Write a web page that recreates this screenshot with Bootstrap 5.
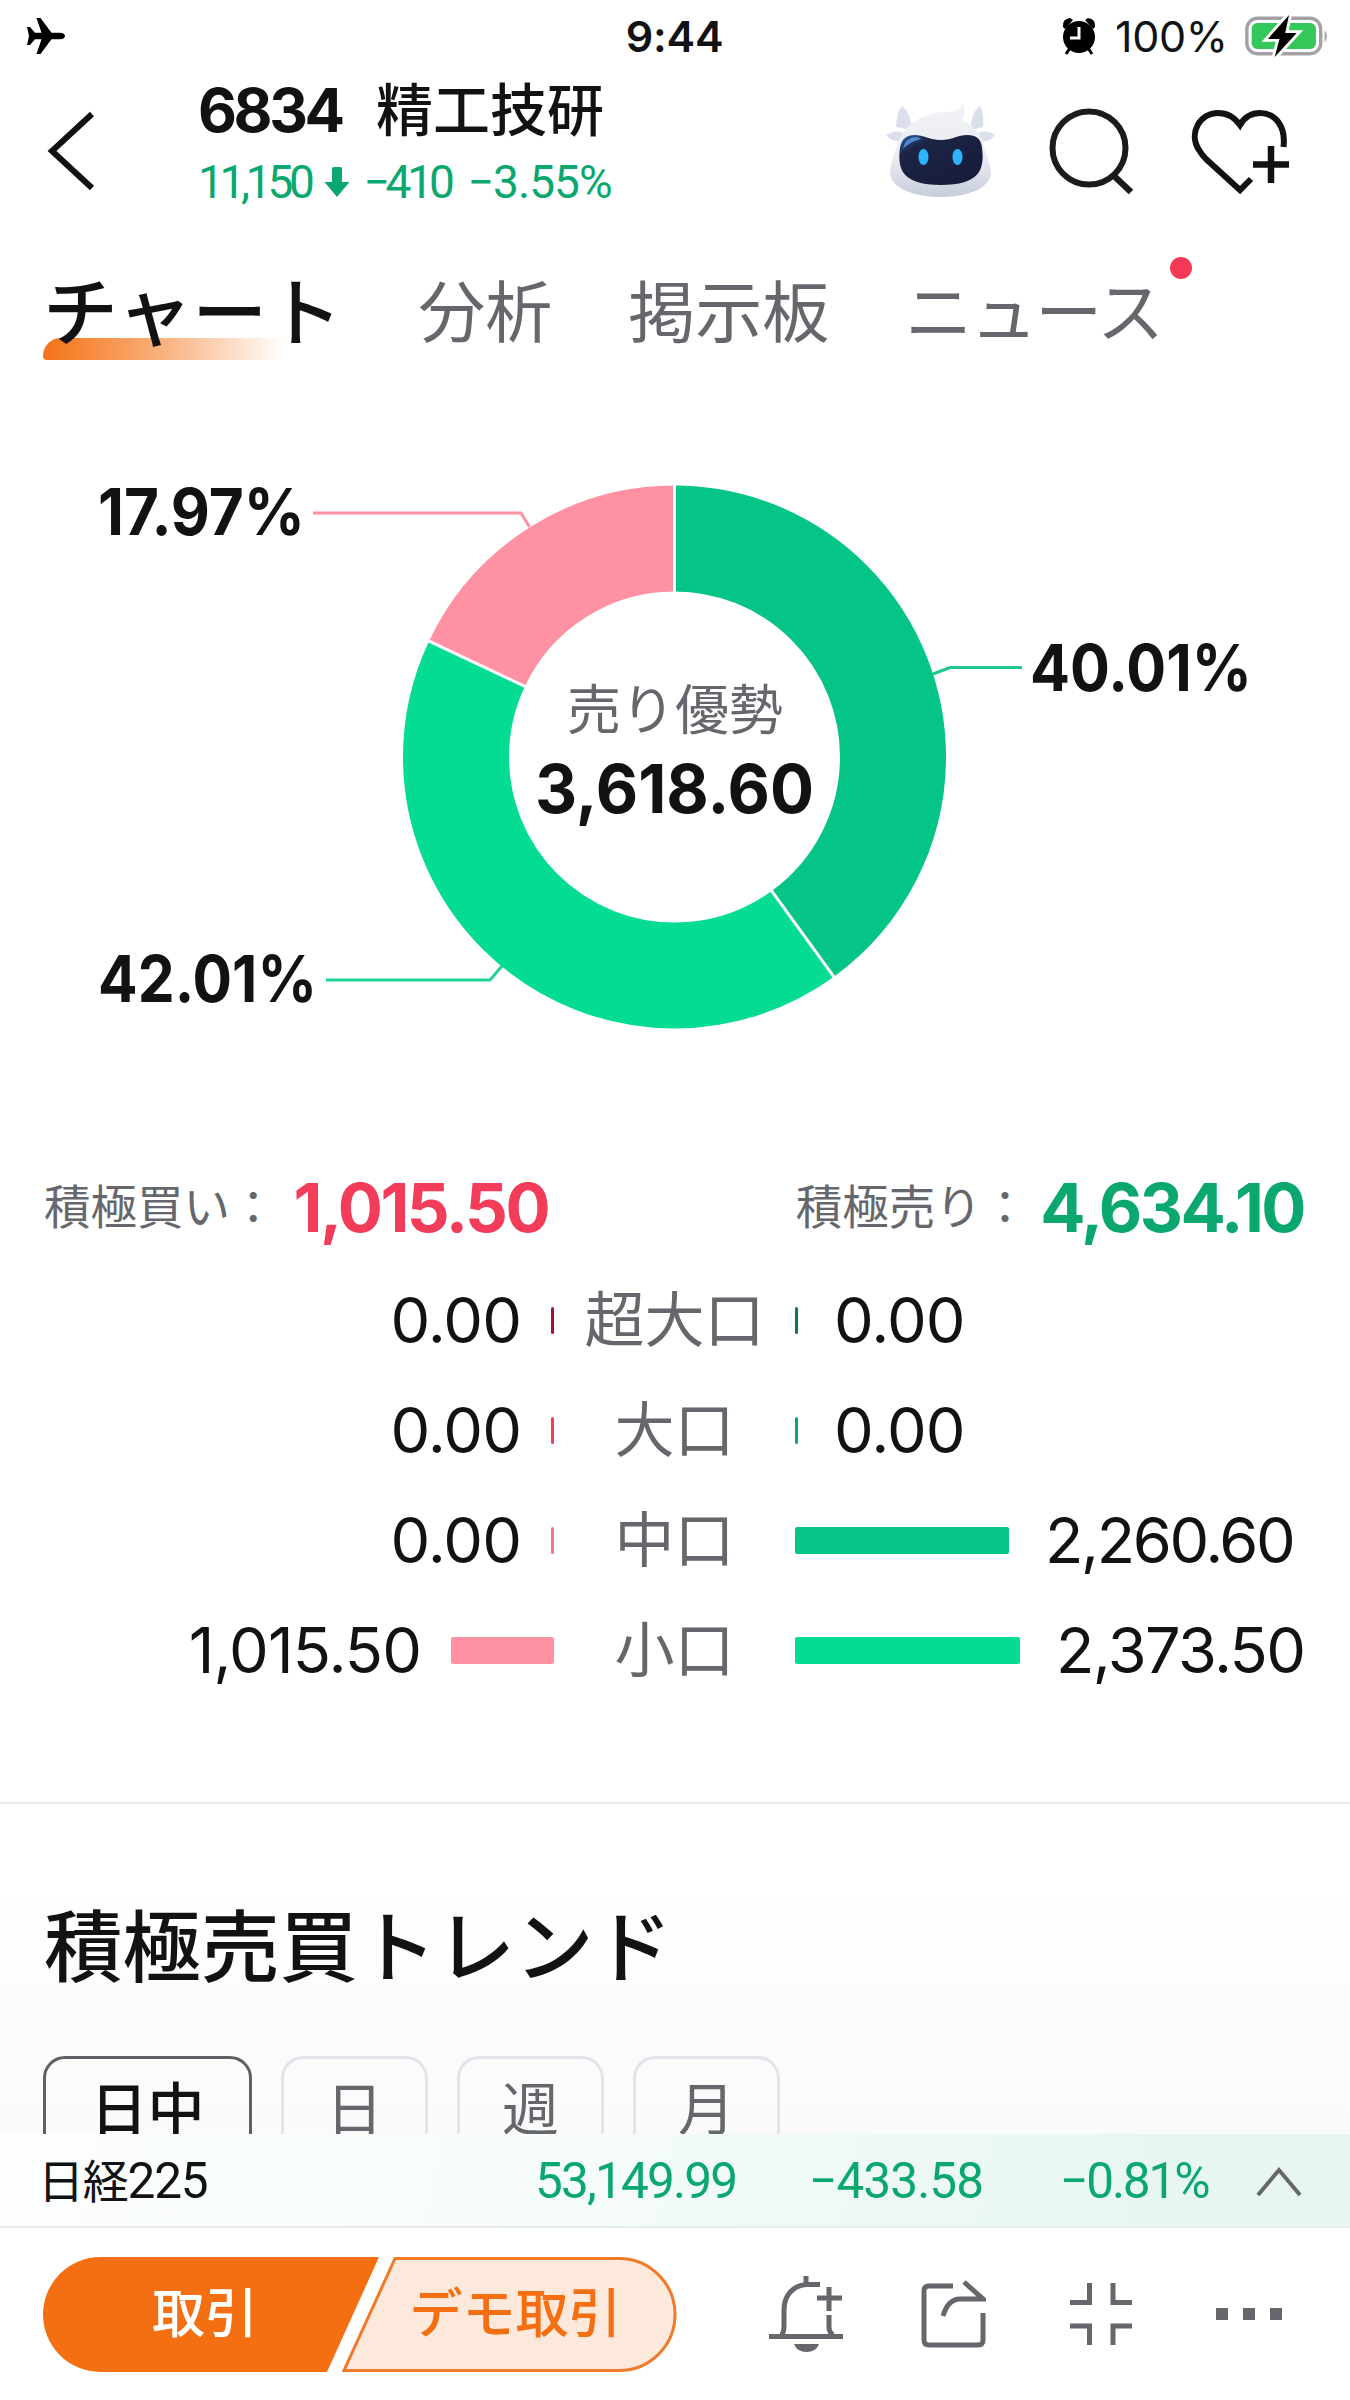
<!DOCTYPE html>
<html lang="ja">
<head>
<meta charset="utf-8">
<meta name="viewport" content="width=device-width, initial-scale=1">
<title>6834 精工技研</title>
<link href="https://cdn.jsdelivr.net/npm/bootstrap@5.3.0/dist/css/bootstrap.min.css" rel="stylesheet">
<style>
  :root { --ink:#111214; --muted-ink:#66676c; --down:#0aa86e; --up:#f23c59; --brand:#f46f12; }
  body { font-family: Inter, "Noto Sans CJK JP", sans-serif; color: var(--ink); background:#fff; line-height:1; }
  .phone { width:1350px; height:2400px; overflow:hidden; white-space:nowrap; }
  .phone > * { flex-shrink:0; }
  .phone svg { display:block; flex:none; }
  .narrow { font-family: Roboto, "Noto Sans CJK JP", sans-serif; }
  .down { color:var(--down); } .up { color:var(--up); } .soft { color:var(--muted-ink); }

  .statusbar { height:72px; padding:0 13px 0 27px; }
  .clock { font-size:43px; font-weight:600; letter-spacing:-.2px; margin-right:15px; }
  .charge { font-size:43px; letter-spacing:-.3px; width:117px; margin-left:19px; }

  .stockbar { height:158px; padding:0 61px 0 47px; }
  .stock-title { font-size:60px; height:72px; margin-top:2px; }
  .stock-code { font-weight:700; letter-spacing:-3.400px; width:178px; }
  .stock-name { font-size:57px; font-weight:500; }
  .stock-price { font-size:46px; height:72px; letter-spacing:-.9px; }

  .tabs-line { height:170px; padding:41px 0 0 43px; gap:76px; font-size:67px; align-items:flex-start; }
  .tab-item { position:relative; height:84px; line-height:84px; color:var(--muted-ink); font-weight:400; }
  .tab-item.on { font-size:75px; color:var(--ink); font-weight:500; z-index:0; }
  .tab-item.on::before { content:""; position:absolute; z-index:-1; left:0; top:67px; width:242px; height:22px;
    border-radius:18px 0 0 4px; background:linear-gradient(90deg,#f47216,rgba(244,114,22,.55) 50%,rgba(244,114,22,0)); }
  .dot-new { position:absolute; right:-30px; top:-14px; width:22px; height:22px; border-radius:50%; background:#f53a58; }

  .totals { height:116px; margin-top:29px; padding:0 46px 0 44px; font-size:46.5px; font-weight:400; }
  .totals b { font-size:67px; font-weight:700; }
  .flow-row { height:110px; font-size:63px; }
  .side-buy { width:554px; gap:30px; } .side-sell { width:555px; gap:36px; }
  .kind { width:241px; text-align:center; font-size:60px; font-weight:400; color:var(--muted-ink); }
  .flow-num { letter-spacing:-.9px; }
  .bar { height:27px; border-radius:2px; }

  .phone > .trend { flex:1 1 0; border-top:2px solid #ececee; margin-top:97px; background:linear-gradient(#fff 25%,#fbfbfc 75%,#fafafb); min-height:0; }
  .trend-head { font-size:78.5px; font-weight:500; line-height:100px; margin:94px 0 58px 44px; }
  .chips { margin-left:43px; gap:29px; }
  .chip { height:104px; width:147px; border:3px solid #e3e3ea; border-radius:22px; font-size:57px; font-weight:400; line-height:101px; text-align:center; color:var(--muted-ink); }
  .chip.on { width:209px; border-color:#606167; color:var(--ink); font-weight:500; }

  .index-strip { height:94px; padding:4px 48px 0 38px; font-size:49.5px; border-bottom:2px solid #e7ebec; background:linear-gradient(100deg,#fcfefd,#f6fcfa 40%,#e8f6f2 85%); }
  .toolbar { height:172px; padding:0 67px 0 43px; }
  .trade { width:634px; height:115px; position:relative; font-size:53px; font-weight:500; }
  .trade svg { position:absolute; inset:0; z-index:0; }
  .trade span { z-index:1; text-align:center; }
</style>
</head>
<body>
<main class="phone d-flex flex-column">

  <header class="statusbar d-flex align-items-center">
    <div class="d-flex" style="flex:1 1 0">
      <svg width="39" height="36" viewBox="0 0 39 36"><path fill="#000" d="M38 18c0 2-2 3.3-5 3.3h-8.500L13.500 36H9.500l5-14.700H8L3 27H0l2-9-2-9h3l5 5.700h6.500L9.500 0h4l11 14.700H33c3 0 5 1.300 5 3.300z"/></svg>
    </div>
    <div class="clock">9:44</div>
    <div class="d-flex align-items-center justify-content-end" style="flex:1 1 0">
      <svg width="34" height="38" viewBox="0 0 34 38"><path d="M8 31l-4 6M26 31l4 6" stroke="#000" stroke-width="3"/><circle cx="17" cy="20" r="16"/><path d="M1 10Q0 2 8 1l3 2-8 9zM33 10Q34 2 26 1l-3 2 8 9z"/><path d="M17 10v11H8" fill="none" stroke="#fff" stroke-width="3"/></svg>
      <div class="charge">100%</div>
      <svg class="ms-2 ps-1" width="97" height="46" viewBox="0 0 97 46"><rect x="3" y="4.500" width="77" height="37" rx="11" fill="#fff" stroke="#a2a2a6" stroke-width="3.500"/><rect x="8" y="9.500" width="67" height="27" rx="6" fill="#34c759"/><path d="M84 17q5 6 0 13z" fill="#a2a2a6"/><path d="M47 1L25 26h12l-5 19 23-25H43z" fill="#000" stroke="#fff" stroke-width="6" paint-order="stroke"/></svg>
    </div>
  </header>

  <section class="stockbar d-flex">
    <svg style="margin-top:39px" width="48" height="80" viewBox="0 0 48 80"><path d="M45 3L5 40l40 37" fill="none" stroke="#111214" stroke-width="6"/></svg>
    <div class="flex-grow-1" style="padding-left:103px">
      <div class="stock-title d-flex align-items-center"><span class="stock-code">6834</span><span class="stock-name">精工技研</span></div>
      <div class="stock-price narrow down d-flex align-items-center"><span style="letter-spacing:-4.300px">11,150</span>
        <svg style="margin:0 14px 0 13px" width="26" height="30" viewBox="0 0 26 30"><path fill="#0aa86e" d="M8 2q0-2 2-2h6q2 0 2 2v13h7.500L13 30 .500 15H8z"/></svg>
        <span style="letter-spacing:-4.200px">−410</span><span style="margin-left:17px">−3.55%</span></div>
    </div>
    <div class="d-flex align-items-start">
      <svg style="margin:30px 52px 0 0" width="112" height="96" viewBox="0 0 112 96">
        <defs><linearGradient id="fur" x1="0" y1="0" x2="0" y2="1"><stop offset="0" stop-color="#f2f3f6"/><stop offset=".6" stop-color="#e9ebf1"/><stop offset="1" stop-color="#c6cddb"/></linearGradient>
        <linearGradient id="visor" x1="0" y1="0" x2="1" y2="1"><stop offset="0" stop-color="#2d5fa8"/><stop offset=".22" stop-color="#1c2444"/><stop offset="1" stop-color="#171a3a"/></linearGradient></defs>
        <path d="M17 4q10 8 9 24L11 25Q12 9 17 4zM95 4q-10 8-9 24l12-3Q99 9 95 4zM1 33q5 7 14 6l4-8q-9-4-18 2zM110 33q-5 7-12 6l-5-8q9-4 17 2z" fill="#d9e0ec"/>
        <path d="M12 45Q16 24 38 15q14-6 29-5 8-1 11-9 4 8-1 17 19 9 22 28 5 10 7 24c0 17-25 25-51 25S5 86 5 70q2-15 7-25z" fill="url(#fur)"/>
        <path d="M15 46q2-13 15-13c8 0 15 5 26 5s17-5 26-5q14 0 15 13c3 22-3 37-41 37S12 68 15 46z" fill="url(#visor)"/>
        <path d="M18 47q2-11 12-12 4 0 6 2-12 3-18 10z" fill="#5089cf"/>
        <ellipse cx="38.500" cy="55" rx="5" ry="8" fill="#2bb5ff"/><ellipse cx="72.500" cy="55" rx="5" ry="8" fill="#2bb5ff"/>
      </svg>
      <svg style="margin:36px 56px 0 0" width="86" height="88" viewBox="0 0 86 88"><circle cx="40" cy="40" r="36.500" fill="none" stroke="#1b1b1d" stroke-width="6"/><path d="M63 66l19 18" stroke="#1b1b1d" stroke-width="6.500"/></svg>
      <svg style="margin-top:36px" width="98" height="88" viewBox="0 0 98 88"><path d="M92.500 39C95 18 84 5 69 5 60 5 53 10 49 17 44 10 37 5 27 5 9 5-3 25 8 42q3 5 7 9l34 31 11-11" fill="none" stroke="#111214" stroke-width="6"/><path d="M80 38v37M62 56.500h36" stroke="#111214" stroke-width="6.500"/></svg>
    </div>
  </section>

  <nav class="tabs-line d-flex">
    <div class="tab-item on">チャート</div>
    <div class="tab-item">分析</div>
    <div class="tab-item">掲示板</div>
    <div class="tab-item" style="letter-spacing:-2px">ニュース<span class="dot-new"></span></div>
  </nav>

  <svg width="1350" height="720" viewBox="0 400 1350 720">
    <g fill="none" stroke-width="106" transform="rotate(-90 674.500 757)">
      <circle cx="674.500" cy="757" r="218.500" pathLength="100" stroke="#04c587" stroke-dasharray="40.01 59.99"/>
      <circle cx="674.500" cy="757" r="218.500" pathLength="100" stroke="#04dc94" stroke-dasharray="42.01 57.99" stroke-dashoffset="-40.01"/>
      <circle cx="674.500" cy="757" r="218.500" pathLength="100" stroke="#ff92a2" stroke-dasharray="17.98 82.02" stroke-dashoffset="-82.02"/>
    </g>
    <g stroke="#fff" stroke-width="3">
      <path d="M674.500 595V482"/>
      <path d="M674.500 595V482" transform="rotate(144.040 674.500 757)"/>
      <path d="M674.500 595V482" transform="rotate(295.270 674.500 757)"/>
    </g>
    <g fill="none" stroke-width="3">
      <path d="M313 513h208l8.500 14" stroke="#ff92a2"/>
      <path d="M326 980h164l12-14" stroke="#1fd49b"/>
      <path d="M933 674l17-6.500h72" stroke="#1fc893"/>
    </g>
    <g font-size="65" font-weight="700" fill="#111214">
      <text x="98" y="535" textLength="207" lengthAdjust="spacingAndGlyphs">17.97%</text>
      <text x="98" y="1002" textLength="219" lengthAdjust="spacingAndGlyphs">42.01%</text>
      <text x="1030" y="690.500" textLength="222" lengthAdjust="spacingAndGlyphs">40.01%</text>
      <text x="535" y="813" font-size="68" textLength="279" lengthAdjust="spacingAndGlyphs">3,618.60</text>
    </g>
    <text x="567" y="730" font-size="54" font-weight="400" fill="#66676c" textLength="216">売り優勢</text>
  </svg>

  <section class="totals d-flex align-items-center justify-content-between soft">
    <div class="d-flex align-items-center"><span>積極買い：</span><b class="up" style="letter-spacing:-2.500px;margin-left:17px">1,015.50</b></div>
    <div class="d-flex align-items-center"><span>積極売り：</span><b class="down" style="letter-spacing:-2.500px;margin-left:12px">4,634.10</b></div>
  </section>

  <section>
    <div class="flow-row d-flex align-items-center">
      <div class="side-buy d-flex align-items-center justify-content-end"><span class="flow-num">0.00</span><i class="bar" style="width:3px;background:#a5122f"></i></div>
      <div class="kind">超大口</div>
      <div class="side-sell d-flex align-items-center"><i class="bar" style="width:3px;background:#0a7a50"></i><span class="flow-num">0.00</span></div>
    </div>
    <div class="flow-row d-flex align-items-center">
      <div class="side-buy d-flex align-items-center justify-content-end"><span class="flow-num">0.00</span><i class="bar" style="width:3px;background:#ee3d59"></i></div>
      <div class="kind">大口</div>
      <div class="side-sell d-flex align-items-center"><i class="bar" style="width:3px;background:#0aa86e"></i><span class="flow-num">0.00</span></div>
    </div>
    <div class="flow-row d-flex align-items-center">
      <div class="side-buy d-flex align-items-center justify-content-end"><span class="flow-num">0.00</span><i class="bar" style="width:3px;background:#f9708a"></i></div>
      <div class="kind">中口</div>
      <div class="side-sell d-flex align-items-center"><i class="bar" style="width:214px;background:#04c587"></i><span class="flow-num" style="letter-spacing:-2.400px">2,260.60</span></div>
    </div>
    <div class="flow-row d-flex align-items-center">
      <div class="side-buy d-flex align-items-center justify-content-end"><span class="flow-num">1,015.50</span><i class="bar" style="width:103px;background:#ff92a2"></i></div>
      <div class="kind">小口</div>
      <div class="side-sell d-flex align-items-center"><i class="bar" style="width:225px;background:#04dc94"></i><span class="flow-num" style="letter-spacing:-1.600px">2,373.50</span></div>
    </div>
  </section>

  <section class="trend overflow-hidden">
    <h2 class="trend-head">積極売買トレンド</h2>
    <div class="chips d-flex">
      <div class="chip on">日中</div><div class="chip">日</div><div class="chip">週</div><div class="chip">月</div>
    </div>
  </section>

  <section class="index-strip narrow d-flex align-items-center down">
    <span style="color:var(--ink);width:497px;letter-spacing:-1.200px"><span style="font-size:46px">日経</span>225</span>
    <span style="width:274px;letter-spacing:-1.800px">53,149.99</span>
    <span style="width:251px;letter-spacing:-.9px">−433.58</span>
    <span class="flex-grow-1" style="letter-spacing:-2.100px">−0.81%</span>
    <svg width="46" height="32" viewBox="0 0 46 32"><path d="M2 29L23 4l21 25" fill="none" stroke="#66676c" stroke-width="4"/></svg>
  </section>

  <footer class="toolbar d-flex align-items-center">
    <div class="trade d-flex align-items-center">
      <svg width="634" height="115" viewBox="0 0 634 115"><path d="M57.500 0H336L284 115H57.500a57.500 57.500 0 010-115z" fill="#f46f12"/><path d="M352 1.500H576a56 56 0 010 112H301z" fill="#fce9dc" stroke="#f07a2a" stroke-width="3"/></svg>
      <span style="color:#fff;width:324px">取引</span><span style="color:var(--brand);width:297px">デモ取引</span>
    </div>
    <div class="d-flex align-items-center" style="margin-left:91px">
      <svg style="margin-right:76px" width="76" height="78" viewBox="0 0 76 78" fill="none" stroke="#66676c" stroke-width="5"><path d="M38 1v8M52 9.500H38C24 11 16 21 16 35v16q0 7-3 9M61 40v12q0 5 4 8M1 61.500h74M61 12v24M49 23h25"/><path d="M26 69h25q-3 8-12.500 8T26 69z" fill="#66676c" stroke="none"/></svg>
      <svg style="margin-right:84px" width="66" height="70" viewBox="0 0 66 70" fill="none" stroke="#66676c" stroke-width="5"><path d="M33 7H9Q4 7 4 12v49q0 5 5 5h49q5 0 5-5V34M23 37Q28 20 40 20h23L44 3"/></svg>
      <svg style="margin-right:83px" width="62" height="62" viewBox="0 0 62 62" fill="none" stroke="#66676c" stroke-width="5"><path d="M0 19.500h19.500V0M43 0v19.500h19M0 43h19.500v19M43 62V43h19"/></svg>
      <svg width="68" height="14" viewBox="0 0 68 14" fill="#66676c"><path d="M1 1h12v12H1zM28 1h12v12H28zM55 1h12v12H55z"/></svg>
    </div>
  </footer>
</main>
<script src="https://cdn.jsdelivr.net/npm/bootstrap@5.3.0/dist/js/bootstrap.bundle.min.js"></script>
</body>
</html>
